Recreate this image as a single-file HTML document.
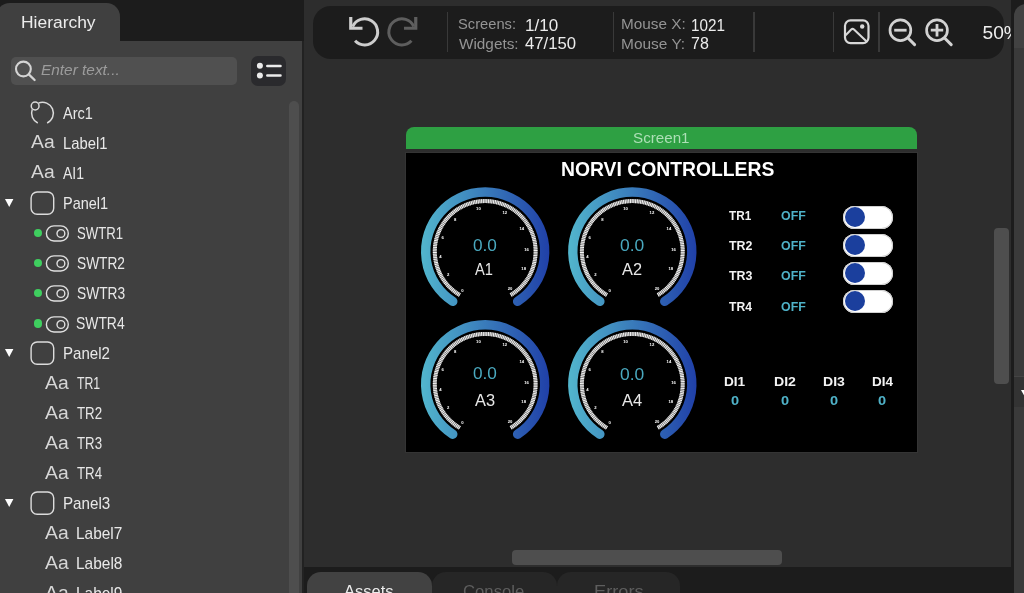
<!DOCTYPE html>
<html lang="en"><head><meta charset="utf-8"><title>SquareLine Studio</title>
<style>
html,body{margin:0;padding:0}
body{width:1024px;height:593px;overflow:hidden;background:#2d2d2d;position:relative;font-family:"Liberation Sans",sans-serif;color:#e6e6e6}
div,span,svg{position:absolute;box-sizing:border-box}
span{white-space:nowrap;line-height:22px;transform-origin:0 50%}
#topbar{left:0;top:0;width:304px;height:40.5px;background:#1c1c1c}
#lpanel{left:0;top:40.5px;width:302.4px;height:553px;background:#404040}
#lsep{left:302.4px;top:40.5px;width:1.4px;height:553px;background:#222}
#htab{left:-4px;top:3px;width:124px;height:40px;background:#404040;border-radius:14px 13.5px 0 0}
#search{left:11px;top:57px;width:226px;height:28px;background:#505050;border-radius:5px}
#listbtn{left:250.9px;top:56px;width:35px;height:29.5px;background:#2a2a2d;border-radius:7px}
#lscroll{left:289.1px;top:101px;width:10px;height:500px;background:#4e4e4e;border-radius:5px}
.hy{color:#ececec}
.ph{font-style:italic;color:#9c9c9c}
.tn{color:#e8e8e8}
.aa{color:#d6d6d6}
.dot{width:8.4px;height:8.4px;border-radius:50%;background:#3fcf5f}
#toolbar{left:312.5px;top:6px;width:691.5px;height:52.5px;background:#1c1c1c;border-radius:18px}
.dv{width:1.5px;top:12.2px;height:39.6px;background:#393939}
.tl{color:#949494}
.tv{color:#ececec}
#zoomclip{left:960px;top:6px;width:51px;height:52px;overflow:hidden}
.zt{color:#f0f0f0}
#rstrip{left:1011px;top:0;width:3px;height:593px;background:#1c1c1c}
#rpanel{left:1014px;top:0;width:10px;height:593px;background:#1c1c1c}
#rtab{left:0;top:3.5px;width:30px;height:44px;background:#424242;border-radius:12px 0 0 0}
#rbody{left:0;top:47.5px;width:10px;height:546px;background:#3a3a3a}
#rsec{left:0;top:376px;width:10px;height:31px;background:#333;border-top:1px solid #444}
#vscroll{left:994px;top:227.5px;width:15px;height:156.8px;background:#4e4e4e;border-radius:4px}
#hscroll{left:512px;top:550px;width:270px;height:15px;background:#4e4e4e;border-radius:4px}
#bottom{left:303.6px;top:566.7px;width:707.4px;height:27px;background:#1c1c1c}
.bt{top:571.7px;height:30px;border-radius:14px 14px 0 0;background:#262626}
.btx{color:#5e5e5e}
#scrhead{left:406px;top:127px;width:511.3px;height:22px;background:#2ea043;border-radius:8px 8px 0 0}
.sh{color:#addfb6}
#scrborder{left:405px;top:152px;width:513.3px;height:301px;background:#343434}
#scr{left:406px;top:153px;width:511.3px;height:299px;background:#000}
.title{font-weight:bold;color:#fff}
.tr{font-weight:bold;color:#f2f2f2}
.off{font-weight:bold;color:#4fb2c8}
.swb{width:50.4px;height:23px;border-radius:11.5px;background:#fff;left:843.1px;box-shadow:inset 0 0 0 1px #d0d0d0}
.swb i{position:absolute;left:1.7px;top:1.5px;width:20px;height:20px;border-radius:50%;background:#1b3f9d}
svg text{font-family:"Liberation Sans",sans-serif}
.tk{font-size:4.2px;font-weight:bold;fill:#fff;text-anchor:middle}
.gv{color:#4aa9bf}
.gl{color:#e8e8e8}
#root{left:0;top:0;width:1024px;height:593px;will-change:transform}
</style></head><body><div id="root">
<div id="topbar"></div>
<div id="htab"></div>
<div id="lpanel"></div>
<div id="lsep"></div>
<span id="h_tab" class="hy" style="left:20.72px;top:11.37px;font-size:17.4px;transform:scale(1.0024,1.0);">Hierarchy</span>
<div id="search">
<svg style="left:2px;top:1px" width="30" height="28" viewBox="0 0 30 28"><circle cx="10.4" cy="11" r="7.4" fill="none" stroke="#d4d4d4" stroke-width="2.1"/><path d="M15.8 16.4L21.6 22" stroke="#d4d4d4" stroke-width="2.3" stroke-linecap="round"/></svg>
</div>
<span id="h_ph" class="ph" style="left:40.92px;top:59.26px;font-size:15.4px;transform:scale(0.9999,1.0);">Enter text...</span>
<div id="listbtn"><svg style="left:0;top:0" width="35" height="30" viewBox="0 0 35 30"><circle cx="8.9" cy="9.7" r="3" fill="#ebebeb"/><circle cx="8.9" cy="19.5" r="3" fill="#ebebeb"/><path d="M16.3 9.9H29.5M16.3 19.6H29.5" stroke="#ebebeb" stroke-width="2.5" stroke-linecap="round"/></svg></div>
<div id="lscroll"></div>
<svg class="ic" style="left:29px;top:100.2px" width="28" height="26" viewBox="0 0 28 26"><path d="M8.76 23.04A10.9 10.9 0 0 1 3.21 9.47M9.58 3.01A10.9 10.9 0 0 1 18.14 23.04" fill="none" stroke="#dadada" stroke-width="1.5"/><circle cx="6.15" cy="6" r="3.9" fill="none" stroke="#dadada" stroke-width="1.5"/></svg>
<span id="tn0" class="tn" style="left:63.33px;top:102.77px;font-size:15.2px;transform:scale(0.9543,1.05);">Arc1</span>
<span id="aa1" class="aa" style="left:30.57px;top:131.05px;font-size:19.2px;transform:scale(1.0075,1.0);">Aa</span>
<span id="tn1" class="tn" style="left:62.78px;top:132.77px;font-size:15.2px;transform:scale(0.9748,1.05);">Label1</span>
<span id="aa2" class="aa" style="left:30.57px;top:161.05px;font-size:19.2px;transform:scale(1.0075,1.0);">Aa</span>
<span id="tn2" class="tn" style="left:63.00px;top:162.77px;font-size:15.2px;transform:scale(0.9201,1.05);">AI1</span>
<svg class="tri" style="left:4.9px;top:199.1px" width="9" height="9" viewBox="0 0 9 9"><path d="M0 0H8.4L4.2 8Z" fill="#fff"/></svg>
<svg class="ic" style="left:29px;top:189.6px" width="28" height="26" viewBox="0 0 28 26"><rect x="2.1" y="2" width="22.6" height="22.3" rx="6" ry="6" fill="none" stroke="#dcdcdc" stroke-width="1.4"/></svg>
<span id="tn3" class="tn" style="left:62.59px;top:192.77px;font-size:15.2px;transform:scale(0.9543,1.05);">Panel1</span>
<span class="dot" style="left:33.9px;top:228.9px"></span>
<svg class="ic" style="left:44px;top:224.0px" width="27" height="19" viewBox="0 0 27 19"><rect x="2.4" y="1.9" width="21.9" height="15.1" rx="7.55" fill="none" stroke="#e0e0e0" stroke-width="1.4"/><circle cx="16.9" cy="9.5" r="3.9" fill="none" stroke="#e0e0e0" stroke-width="1.4"/></svg>
<span id="tn4" class="tn" style="left:76.82px;top:222.77px;font-size:15.2px;transform:scale(0.8655,1.05);">SWTR1</span>
<span class="dot" style="left:33.9px;top:258.9px"></span>
<svg class="ic" style="left:44px;top:254.0px" width="27" height="19" viewBox="0 0 27 19"><rect x="2.4" y="1.9" width="21.9" height="15.1" rx="7.55" fill="none" stroke="#e0e0e0" stroke-width="1.4"/><circle cx="16.9" cy="9.5" r="3.9" fill="none" stroke="#e0e0e0" stroke-width="1.4"/></svg>
<span id="tn5" class="tn" style="left:76.77px;top:252.77px;font-size:15.2px;transform:scale(0.9028,1.05);">SWTR2</span>
<span class="dot" style="left:33.9px;top:288.9px"></span>
<svg class="ic" style="left:44px;top:284.0px" width="27" height="19" viewBox="0 0 27 19"><rect x="2.4" y="1.9" width="21.9" height="15.1" rx="7.55" fill="none" stroke="#e0e0e0" stroke-width="1.4"/><circle cx="16.9" cy="9.5" r="3.9" fill="none" stroke="#e0e0e0" stroke-width="1.4"/></svg>
<span id="tn6" class="tn" style="left:76.77px;top:282.77px;font-size:15.2px;transform:scale(0.9046,1.05);">SWTR3</span>
<span class="dot" style="left:33.9px;top:319.4px"></span>
<svg class="ic" style="left:44px;top:314.5px" width="27" height="19" viewBox="0 0 27 19"><rect x="2.4" y="1.9" width="21.9" height="15.1" rx="7.55" fill="none" stroke="#e0e0e0" stroke-width="1.4"/><circle cx="16.9" cy="9.5" r="3.9" fill="none" stroke="#e0e0e0" stroke-width="1.4"/></svg>
<span id="tn7" class="tn" style="left:76.25px;top:313.27px;font-size:15.2px;transform:scale(0.9150,1.05);">SWTR4</span>
<svg class="tri" style="left:4.9px;top:349.1px" width="9" height="9" viewBox="0 0 9 9"><path d="M0 0H8.4L4.2 8Z" fill="#fff"/></svg>
<svg class="ic" style="left:29px;top:339.6px" width="28" height="26" viewBox="0 0 28 26"><rect x="2.1" y="2" width="22.6" height="22.3" rx="6" ry="6" fill="none" stroke="#dcdcdc" stroke-width="1.4"/></svg>
<span id="tn8" class="tn" style="left:62.71px;top:343.27px;font-size:15.2px;transform:scale(0.9911,1.05);">Panel2</span>
<span id="aa9" class="aa" style="left:45.31px;top:371.55px;font-size:19.2px;transform:scale(1.0075,1.0);">Aa</span>
<span id="tn9" class="tn" style="left:77.18px;top:373.27px;font-size:15.2px;transform:scale(0.8084,1.05);">TR1</span>
<span id="aa10" class="aa" style="left:45.31px;top:401.55px;font-size:19.2px;transform:scale(1.0075,1.0);">Aa</span>
<span id="tn10" class="tn" style="left:77.11px;top:403.27px;font-size:15.2px;transform:scale(0.8755,1.05);">TR2</span>
<span id="aa11" class="aa" style="left:45.31px;top:431.55px;font-size:19.2px;transform:scale(1.0075,1.0);">Aa</span>
<span id="tn11" class="tn" style="left:77.14px;top:433.27px;font-size:15.2px;transform:scale(0.8712,1.05);">TR3</span>
<span id="aa12" class="aa" style="left:45.31px;top:461.55px;font-size:19.2px;transform:scale(1.0075,1.0);">Aa</span>
<span id="tn12" class="tn" style="left:77.11px;top:463.27px;font-size:15.2px;transform:scale(0.8736,1.05);">TR4</span>
<svg class="tri" style="left:4.9px;top:499.1px" width="9" height="9" viewBox="0 0 9 9"><path d="M0 0H8.4L4.2 8Z" fill="#fff"/></svg>
<svg class="ic" style="left:29px;top:489.6px" width="28" height="26" viewBox="0 0 28 26"><rect x="2.1" y="2" width="22.6" height="22.3" rx="6" ry="6" fill="none" stroke="#dcdcdc" stroke-width="1.4"/></svg>
<span id="tn13" class="tn" style="left:62.79px;top:493.27px;font-size:15.2px;transform:scale(0.9987,1.05);">Panel3</span>
<span id="aa14" class="aa" style="left:45.31px;top:521.55px;font-size:19.2px;transform:scale(1.0075,1.0);">Aa</span>
<span id="tn14" class="tn" style="left:76.20px;top:523.27px;font-size:15.2px;transform:scale(1.0153,1.05);">Label7</span>
<span id="aa15" class="aa" style="left:45.31px;top:551.55px;font-size:19.2px;transform:scale(1.0075,1.0);">Aa</span>
<span id="tn15" class="tn" style="left:76.16px;top:553.27px;font-size:15.2px;transform:scale(1.0179,1.05);">Label8</span>
<span id="aa16" class="aa" style="left:45.31px;top:581.55px;font-size:19.2px;transform:scale(1.0075,1.0);">Aa</span>
<span id="tn16" class="tn" style="left:76.17px;top:583.27px;font-size:15.2px;transform:scale(1.0172,1.05);">Label9</span>

<div id="toolbar"></div>
<svg style="left:345px;top:12px" width="80" height="40" viewBox="345 12 80 40">
<path d="M352.68 26.59A13.05 13.05 0 1 1 355.06 40.8" fill="none" stroke="#cdcdcd" stroke-width="3"/>
<path d="M350.75 17V28.25H362.5" fill="none" stroke="#cdcdcd" stroke-width="3.2"/>
<path d="M413.82 26.59A13.05 13.05 0 1 0 411.44 40.8" fill="none" stroke="#5e5e5e" stroke-width="3"/>
<path d="M415.75 17V28.25H404" fill="none" stroke="#5e5e5e" stroke-width="3.2"/>
</svg>
<div class="dv" style="left:446.8px"></div>
<div class="dv" style="left:612.8px"></div>
<div class="dv" style="left:753.2px"></div>
<div class="dv" style="left:832.5px"></div>
<div class="dv" style="left:878px"></div>
<span id="t_scr" class="tl" style="left:458.35px;top:12.84px;font-size:14.6px;transform:scale(1.0067,1.0);">Screens:</span>
<span id="t_scrv" class="tv" style="left:525.27px;top:15.14px;font-size:15px;transform:scale(1.1343,1.05);">1/10</span>
<span id="t_wid" class="tl" style="left:459.33px;top:33.24px;font-size:14.6px;transform:scale(1.0494,1.0);">Widgets:</span>
<span id="t_widv" class="tv" style="left:524.85px;top:33.34px;font-size:15px;transform:scale(1.1134,1.05);">47/150</span>
<span id="t_mx" class="tl" style="left:620.53px;top:12.64px;font-size:14.6px;transform:scale(1.0500,1.0);">Mouse X:</span>
<span id="t_mxv" class="tv" style="left:690.99px;top:15.14px;font-size:15px;transform:scale(1.0187,1.05);">1021</span>
<span id="t_my" class="tl" style="left:620.67px;top:33.24px;font-size:14.6px;transform:scale(1.0593,1.0);">Mouse Y:</span>
<span id="t_myv" class="tv" style="left:690.90px;top:33.34px;font-size:15px;transform:scale(1.0681,1.05);">78</span>
<svg style="left:840px;top:15px" width="130" height="36" viewBox="840 15 130 36">
<rect x="845" y="20.3" width="23.5" height="22.8" rx="5.5" fill="none" stroke="#d8d8d8" stroke-width="2.2"/>
<path d="M845.6 35.2L851.2 29.6Q852.6 28.3 854 29.6L867.2 42" fill="none" stroke="#d8d8d8" stroke-width="2.1" stroke-linejoin="round"/>
<circle cx="862.2" cy="26.5" r="2.2" fill="#d8d8d8"/>
<circle cx="900.4" cy="30.2" r="10.4" fill="none" stroke="#d2d2d2" stroke-width="2.7"/>
<path d="M908.2 38.2L914.6 44.6" stroke="#d2d2d2" stroke-width="3" stroke-linecap="round"/>
<path d="M894.2 30.2H906.6" stroke="#d2d2d2" stroke-width="2.8"/>
<circle cx="937" cy="30.2" r="10.4" fill="none" stroke="#d2d2d2" stroke-width="2.7"/>
<path d="M944.8 38.2L951.2 44.6" stroke="#d2d2d2" stroke-width="3" stroke-linecap="round"/>
<path d="M930.8 30.2H943.2M937 24V36.4" stroke="#d2d2d2" stroke-width="2.8"/>
</svg>
<div id="zoomclip"><span class="zt" style="left:22.5px;top:16.4px;font-size:19.2px">50%</span></div>

<div id="scrhead"></div>
<span id="c_scr" class="sh" style="left:633.32px;top:127.43px;font-size:15.2px;transform:scale(0.9919,1.0);">Screen1</span>
<div id="scrborder"></div>
<div id="scr"></div>
<svg style="left:406px;top:153px" width="511" height="299" viewBox="406 153 511 299">
<defs><linearGradient id="gg1" gradientUnits="userSpaceOnUse" x1="421.2" y1="0" x2="549.2" y2="0"><stop offset="0" stop-color="#52b6cd"/><stop offset="1" stop-color="#2040a8"/></linearGradient><linearGradient id="gg2" gradientUnits="userSpaceOnUse" x1="568.3" y1="0" x2="696.3" y2="0"><stop offset="0" stop-color="#52b6cd"/><stop offset="1" stop-color="#2040a8"/></linearGradient><linearGradient id="gg3" gradientUnits="userSpaceOnUse" x1="421.2" y1="0" x2="549.2" y2="0"><stop offset="0" stop-color="#52b6cd"/><stop offset="1" stop-color="#2040a8"/></linearGradient><linearGradient id="gg4" gradientUnits="userSpaceOnUse" x1="568.3" y1="0" x2="696.3" y2="0"><stop offset="0" stop-color="#52b6cd"/><stop offset="1" stop-color="#2040a8"/></linearGradient></defs>
<path d="M452.79 301.40 A59.5 59.5 0 1 1 517.61 301.40" fill="none" stroke="url(#gg1)" stroke-width="9.4" stroke-linecap="round"/>
<path d="M459.85 295.06 A50.4 50.4 0 1 1 510.55 295.06" fill="none" stroke="#6e6e6e" stroke-width="4.0"/>
<path d="M459.85 295.06 A50.4 50.4 0 1 1 510.55 295.06" fill="none" stroke="#f8f8f8" stroke-width="4.0" stroke-dasharray="0.95 0.75"/>
<text x="462.5" y="291.6" class="tk">0</text>
<text x="448.2" y="276.2" class="tk">2</text>
<text x="440.4" y="258.0" class="tk">4</text>
<text x="442.6" y="238.5" class="tk">6</text>
<text x="455.2" y="220.5" class="tk">8</text>
<text x="478.4" y="209.8" class="tk">10</text>
<text x="504.8" y="213.5" class="tk">12</text>
<text x="521.8" y="230.4" class="tk">14</text>
<text x="526.5" y="251.1" class="tk">16</text>
<text x="523.7" y="270.1" class="tk">18</text>
<text x="510.0" y="290.1" class="tk">20</text>
<path d="M599.89 301.40 A59.5 59.5 0 1 1 664.71 301.40" fill="none" stroke="url(#gg2)" stroke-width="9.4" stroke-linecap="round"/>
<path d="M606.95 295.06 A50.4 50.4 0 1 1 657.65 295.06" fill="none" stroke="#6e6e6e" stroke-width="4.0"/>
<path d="M606.95 295.06 A50.4 50.4 0 1 1 657.65 295.06" fill="none" stroke="#f8f8f8" stroke-width="4.0" stroke-dasharray="0.95 0.75"/>
<text x="609.6" y="291.6" class="tk">0</text>
<text x="595.3" y="276.2" class="tk">2</text>
<text x="587.5" y="258.0" class="tk">4</text>
<text x="589.7" y="238.5" class="tk">6</text>
<text x="602.3" y="220.5" class="tk">8</text>
<text x="625.5" y="209.8" class="tk">10</text>
<text x="651.9" y="213.5" class="tk">12</text>
<text x="668.9" y="230.4" class="tk">14</text>
<text x="673.6" y="251.1" class="tk">16</text>
<text x="670.8" y="270.1" class="tk">18</text>
<text x="657.1" y="290.1" class="tk">20</text>
<path d="M452.79 434.20 A59.5 59.5 0 1 1 517.61 434.20" fill="none" stroke="url(#gg3)" stroke-width="9.4" stroke-linecap="round"/>
<path d="M459.85 427.86 A50.4 50.4 0 1 1 510.55 427.86" fill="none" stroke="#6e6e6e" stroke-width="4.0"/>
<path d="M459.85 427.86 A50.4 50.4 0 1 1 510.55 427.86" fill="none" stroke="#f8f8f8" stroke-width="4.0" stroke-dasharray="0.95 0.75"/>
<text x="462.5" y="424.4" class="tk">0</text>
<text x="448.2" y="409.0" class="tk">2</text>
<text x="440.4" y="390.8" class="tk">4</text>
<text x="442.6" y="371.3" class="tk">6</text>
<text x="455.2" y="353.3" class="tk">8</text>
<text x="478.4" y="342.6" class="tk">10</text>
<text x="504.8" y="346.3" class="tk">12</text>
<text x="521.8" y="363.2" class="tk">14</text>
<text x="526.5" y="383.9" class="tk">16</text>
<text x="523.7" y="402.9" class="tk">18</text>
<text x="510.0" y="422.9" class="tk">20</text>
<path d="M599.89 434.20 A59.5 59.5 0 1 1 664.71 434.20" fill="none" stroke="url(#gg4)" stroke-width="9.4" stroke-linecap="round"/>
<path d="M606.95 427.86 A50.4 50.4 0 1 1 657.65 427.86" fill="none" stroke="#6e6e6e" stroke-width="4.0"/>
<path d="M606.95 427.86 A50.4 50.4 0 1 1 657.65 427.86" fill="none" stroke="#f8f8f8" stroke-width="4.0" stroke-dasharray="0.95 0.75"/>
<text x="609.6" y="424.4" class="tk">0</text>
<text x="595.3" y="409.0" class="tk">2</text>
<text x="587.5" y="390.8" class="tk">4</text>
<text x="589.7" y="371.3" class="tk">6</text>
<text x="602.3" y="353.3" class="tk">8</text>
<text x="625.5" y="342.6" class="tk">10</text>
<text x="651.9" y="346.3" class="tk">12</text>
<text x="668.9" y="363.2" class="tk">14</text>
<text x="673.6" y="383.9" class="tk">16</text>
<text x="670.8" y="402.9" class="tk">18</text>
<text x="657.1" y="422.9" class="tk">20</text>
</svg>
<span id="v1" class="gv" style="left:473.41px;top:233.67px;font-size:17.4px;transform:scale(0.9895,1.0);">0.0</span>
<span id="v2" class="gv" style="left:620.39px;top:233.67px;font-size:17.4px;transform:scale(1.0029,1.0);">0.0</span>
<span id="v3" class="gv" style="left:473.41px;top:361.97px;font-size:17.4px;transform:scale(0.9895,1.0);">0.0</span>
<span id="v4" class="gv" style="left:620.39px;top:362.97px;font-size:17.4px;transform:scale(1.0029,1.0);">0.0</span>
<span id="l1" class="gl" style="left:475.35px;top:257.97px;font-size:17.4px;transform:scale(0.8421,1.0);">A1</span>
<span id="l2" class="gl" style="left:622.48px;top:257.97px;font-size:17.4px;transform:scale(0.9389,1.0);">A2</span>
<span id="l3" class="gl" style="left:475.34px;top:388.87px;font-size:17.4px;transform:scale(0.9414,1.0);">A3</span>
<span id="l4" class="gl" style="left:622.48px;top:388.87px;font-size:17.4px;transform:scale(0.9479,1.0);">A4</span>
<span id="c_title" class="title" style="left:561.28px;top:157.81px;font-size:19.6px;transform:scale(0.9863,1.0);">NORVI CONTROLLERS</span>
<span id="c_tr0" class="tr" style="left:728.72px;top:204.66px;font-size:12.8px;transform:scale(0.9193,1.0);">TR1</span>
<span id="c_off0" class="off" style="left:781.03px;top:204.66px;font-size:12.8px;transform:scale(0.9672,1.0);">OFF</span>
<div class="swb" style="top:205.9px"><i></i></div>
<span id="c_tr1" class="tr" style="left:728.71px;top:234.86px;font-size:12.8px;transform:scale(0.9684,1.0);">TR2</span>
<span id="c_off1" class="off" style="left:781.03px;top:234.86px;font-size:12.8px;transform:scale(0.9672,1.0);">OFF</span>
<div class="swb" style="top:233.9px"><i></i></div>
<span id="c_tr2" class="tr" style="left:728.71px;top:265.46px;font-size:12.8px;transform:scale(0.9684,1.0);">TR3</span>
<span id="c_off2" class="off" style="left:781.03px;top:265.46px;font-size:12.8px;transform:scale(0.9672,1.0);">OFF</span>
<div class="swb" style="top:261.9px"><i></i></div>
<span id="c_tr3" class="tr" style="left:728.71px;top:296.06px;font-size:12.8px;transform:scale(0.9480,1.0);">TR4</span>
<span id="c_off3" class="off" style="left:781.03px;top:296.06px;font-size:12.8px;transform:scale(0.9672,1.0);">OFF</span>
<div class="swb" style="top:289.9px"><i></i></div>
<span id="c_di0" class="tr" style="left:724.26px;top:370.83px;font-size:13.2px;transform:scale(1.0328,1.0);">DI1</span>
<span id="c_z0" class="off" style="left:731.32px;top:389.63px;font-size:13.2px;transform:scale(1.1074,1.0);">0</span>
<span id="c_di1" class="tr" style="left:774.21px;top:370.83px;font-size:13.2px;transform:scale(1.0690,1.0);">DI2</span>
<span id="c_z1" class="off" style="left:781.41px;top:389.63px;font-size:13.2px;transform:scale(1.1074,1.0);">0</span>
<span id="c_di2" class="tr" style="left:823.40px;top:370.83px;font-size:13.2px;transform:scale(1.0636,1.0);">DI3</span>
<span id="c_z2" class="off" style="left:830.45px;top:389.63px;font-size:13.2px;transform:scale(1.1074,1.0);">0</span>
<span id="c_di3" class="tr" style="left:872.07px;top:370.83px;font-size:13.2px;transform:scale(1.0246,1.0);">DI4</span>
<span id="c_z3" class="off" style="left:878.43px;top:389.63px;font-size:13.2px;transform:scale(1.1074,1.0);">0</span>

<div id="vscroll"></div>
<div id="hscroll"></div>
<div id="bottom"></div>
<div class="bt" style="left:307.2px;width:125px;background:#424242"></div>
<div class="bt" style="left:432.4px;width:124.3px"></div>
<div class="bt" style="left:556.8px;width:123.6px"></div>
<span id="b_as" class="btx" style="left:344.05px;top:580.88px;font-size:16.8px;transform:scale(0.9820,1.0);color:#ececec">Assets</span>
<span id="b_co" class="btx" style="left:462.67px;top:580.88px;font-size:16.8px;transform:scale(0.9956,1.0);">Console</span>
<span id="b_er" class="btx" style="left:593.69px;top:580.88px;font-size:16.8px;transform:scale(1.0853,1.0);">Errors</span>
<div id="rstrip"></div>
<div id="rpanel"><div id="rtab"></div><div id="rbody"></div><div id="rsec"></div>
<svg style="left:6.6px;top:389.5px" width="9" height="8" viewBox="0 0 9 8"><path d="M0 0H8.4L4.2 7.4Z" fill="#fff"/></svg></div>
</div></body></html>
